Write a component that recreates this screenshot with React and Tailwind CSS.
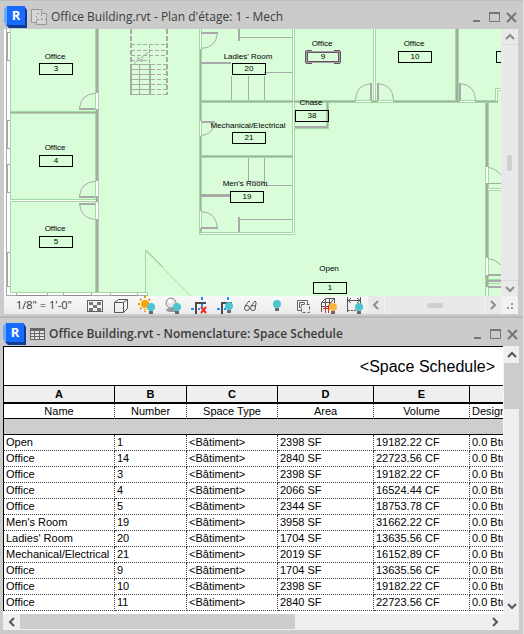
import React from 'react';

const columns = [
  { letter: 'A', name: 'Name' },
  { letter: 'B', name: 'Number' },
  { letter: 'C', name: 'Space Type' },
  { letter: 'D', name: 'Area' },
  { letter: 'E', name: 'Volume' },
];

const spaces = [
  ['Open', '1', '2398 SF', '19182.22 CF'],
  ['Office', '14', '2840 SF', '22723.56 CF'],
  ['Office', '3', '2398 SF', '19182.22 CF'],
  ['Office', '4', '2066 SF', '16524.44 CF'],
  ['Office', '5', '2344 SF', '18753.78 CF'],
  ["Men's Room", '19', '3958 SF', '31662.22 CF'],
  ["Ladies' Room", '20', '1704 SF', '13635.56 CF'],
  ['Mechanical/Electrical', '21', '2019 SF', '16152.89 CF'],
  ['Office', '9', '1704 SF', '13635.56 CF'],
  ['Office', '10', '2398 SF', '19182.22 CF'],
  ['Office', '11', '2840 SF', '22723.56 CF'],
];

// label, number, label centre, label baseline, tag left, tag top
const rooms = [
  ['Office', '3', 55, 59, 39, 63],
  ['Office', '4', 55, 150, 39, 155],
  ['Office', '5', 55, 231, 39, 236],
  ["Ladies' Room", '20', 248, 59, 232, 63],
  ['Mechanical/Electrical', '21', 248, 128, 232, 132],
  ["Men's Room", '19', 245, 186, 230, 191],
  ['Chase', '38', 311, 105, 295, 110],
  ['Office', '10', 414, 46, 398, 51],
  ['Open', '1', 329, 271, 313, 282],
];

const ChevronIcon = ({ d }) => (
  <svg width="10" height="10" viewBox="0 0 10 10" fill="none" stroke="currentColor" strokeWidth="2">
    <path d={d} />
  </svg>
);

const UP = 'M1 7 5 3 9 7';
const DOWN = 'M1 3 5 7 9 3';
const LEFT = 'M7 1 3 5 7 9';
const RIGHT = 'M3 1 7 5 3 9';

const RevitLogo = () => (
  <svg width="23" height="22" viewBox="0 0 23 22" className="shrink-0">
    <path d="M0 3 3 0V19L0 16Z" fill="#6ea8f7" />
    <path d="M3 19H21V1L23 4V22H5L1 18Z" fill="#0c3c94" />
    <rect x="3" y="0" width="18" height="19" fill="#186bff" />
    <text x="12" y="14" textAnchor="middle" fill="#fff" fontSize="13" fontWeight="700" fontFamily="'Open Sans', sans-serif">R</text>
  </svg>
);

const PlanIcon = () => (
  <svg width="16" height="16" viewBox="0 0 16 16" fill="none" stroke="#979797" className="shrink-0">
    <path d="M0.5 0.5H10.5V4.5H15.5V15.5H5.5V13.5H0.5Z" fill="#d6d6d6" />
    <path d="M5.5 13V5M6 4.5H10M10.5 5V10M6 10.5H15" strokeDasharray="2 2" />
  </svg>
);

const ScheduleIcon = () => (
  <svg width="15" height="12" viewBox="0 0 15 12" className="shrink-0">
    <rect width="15" height="12" fill="#666" />
    <g fill="#e2e2e2">
      {[3, 6, 9].map((y) => (
        <g key={y}>
          <rect x="1" y={y} width="3" height="2" />
          <rect x="5" y={y} width="4" height="2" />
          <rect x="10" y={y} width="4" height="2" />
        </g>
      ))}
    </g>
  </svg>
);

const WindowButtons = () => (
  <div className="flex items-center gap-0.5 -mr-0.5 text-[#767676]">
    <button type="button" aria-label="Minimize" className="w-4 h-4">
      <svg width="16" height="16" viewBox="0 0 16 16"><rect x="5" y="11" width="7" height="2" fill="currentColor" /></svg>
    </button>
    <button type="button" aria-label="Maximize" className="w-4 h-4">
      <svg width="16" height="16" viewBox="0 0 16 16" fill="none" stroke="currentColor">
        <path d="M3.5 3V12.5H13.5V3" />
        <path d="M3 4H14" strokeWidth="2" />
      </svg>
    </button>
    <button type="button" aria-label="Close" className="w-4 h-4">
      <svg width="16" height="16" viewBox="0 0 16 16" stroke="currentColor" strokeWidth="2"><path d="M3 4 12 13M12 4 3 13" /></svg>
    </button>
  </div>
);

const Lamp = ({ x = 17, y = 10, color = '#4bc4cf' }) => (
  <g>
    <rect x={x - 2} y={y + 4} width="4" height="3" fill="#6b6b6b" />
    <circle cx={x} cy={y} r="4" fill={color} />
  </g>
);

const CropLines = () => (
  <g fill="none">
    <path d="M10 18V7H20" stroke="#4c4c4c" strokeWidth="2" />
    <path d="M16 1V4M16 8V11M5 13H8M12 13H14" stroke="#1e8fff" strokeWidth="2" />
  </g>
);

const tools = [
  {
    label: 'Detail level',
    icon: (
      <g>
        <rect x="5.5" y="4.5" width="15" height="11" fill="#f3f3f3" stroke="#5f5f5f" />
        <path d="M7 6h4v3H7zM15 6h4v3h-4zM11 9h4v3h-4zM7 12h4v3H7zM15 12h4v3h-4z" fill="#777" />
      </g>
    ),
  },
  {
    label: 'Visual style',
    icon: <path d="M6.5 6.5H15.5V16.5H6.5ZM6.5 6.5 10.5 3.5H19.5L15.5 6.5M19.5 3.5V12.5L15.5 16.5" fill="none" stroke="#555" />,
  },
  {
    label: 'Sun path',
    icon: (
      <g>
        <path d="M11 0V16M4 8H18M6 3 16 13M16 3 6 13" stroke="#e8930c" strokeWidth="2" strokeDasharray="2 1" />
        <circle cx="11" cy="8" r="5" fill="#f3f3f3" />
        <circle cx="11" cy="8" r="4" fill="#f9a400" />
        <Lamp y={11} />
      </g>
    ),
  },
  {
    label: 'Shadows',
    icon: (
      <g>
        <ellipse cx="12" cy="14" rx="6" ry="2" fill="#9a9a9a" />
        <circle cx="11" cy="7" r="5" fill="#e6e6e6" stroke="#858585" />
        <circle cx="10" cy="5" r="2" fill="#fff" />
        <Lamp y={11} />
      </g>
    ),
  },
  {
    label: 'Crop view',
    icon: (
      <g>
        <CropLines />
        <path d="M15 11 20 17M20 11 15 17" stroke="#ef2b2b" strokeWidth="2" />
      </g>
    ),
  },
  { label: 'Show crop region', icon: (<g><CropLines /><Lamp /></g>) },
  {
    label: 'Temporary hide',
    icon: (
      <g fill="none" stroke="#555">
        <circle cx="9" cy="12" r="2.5" />
        <circle cx="15" cy="12" r="2.5" />
        <path d="M7 10 11 5 12 6M13 10 17 5 18 6V8L17 11" />
      </g>
    ),
  },
  { label: 'Reveal hidden elements', icon: <Lamp x={13} y={8} /> },
  {
    label: 'Temporary view properties',
    icon: (
      <g fill="none" stroke="#666">
        <path d="M11 14.5H7.5V4.5H17.5V8" />
        <path d="M11.5 11.5H9.5V6.5H14.5V8" />
        <path d="M11.5 8.5H19.5V16.5H11.5Z" strokeDasharray="3 2" />
      </g>
    ),
  },
  {
    label: 'Analytical model',
    icon: (
      <g fill="none">
        <path d="M5.5 16V6.5L9.5 2.5H18.5V7M5.5 6.5H15M9.5 3V13M13.5 3V10M5 10.5H13M18 2.5 15 6.5V9" stroke="#555" />
        <path d="M9.5 9V17M12.5 9V17M7 12.5H15" stroke="#d92c2c" />
        <Lamp y={11} color="#fbb53c" />
      </g>
    ),
  },
  {
    label: 'Reveal constraints',
    icon: (
      <g fill="none" stroke="#555">
        <path d="M5.5 1V16M18.5 1V8M6 4.5H18M9 2 6 4.5 9 7M15 2 18 4.5 15 7" />
        <path d="M6 14.5H14" strokeDasharray="2 1" />
        <g stroke="none"><Lamp y={11} /></g>
      </g>
    ),
  },
];

const FloorPlan = () => (
  <svg
    viewBox="4 29 498 267"
    preserveAspectRatio="xMinYMin slice"
    className="block w-full h-[267px]"
    fill="none"
    shapeRendering="crispEdges"
    role="img"
    aria-label="Mechanical floor plan"
  >
    <rect x="4" y="29" width="498" height="267" fill="#d9fdd9" />
    <path d="M4 29H10V292H147V296H4Z" fill="#fff" />

    {/* facade */}
    <g stroke="#a6a8a6">
      <path d="M6.5 29V296" />
      <path d="M10 32.5H7.5V60.5H10M10 120.5H7.5V148.5H10M10 164.5H7.5V192.5H10M10 252.5H7.5V286.5H10" />
      <path d="M6 295.5H147M16.5 293V296M47.5 293V296M63.5 293V296M91.5 293V296M110.5 293V296M137.5 293V296" />
    </g>
    <path d="M17 295.5H47M64 295.5H91M111 295.5H137" stroke="#8e8e8e" />

    {/* room outlines */}
    <g stroke="#a3d9a3">
      <path d="M10.5 29V292.5H147.5V296M98.5 29V292M95.5 29V292" />
      <path d="M10 111.5H96M10 113.5H96M10 199.5H97M10 201.5H97" />
      <path d="M199.5 29V234.5H294.5V29M201.5 29V232.5H292.5V29" />
      <path d="M201 100.5H292M201 102.5H292M201 155.5H292M201 157.5H292" />
      <path d="M295 100.5H496M295 102.5H498M373.5 29V101M375.5 29V101M458.5 29V101M455.5 29V101" />
      <path d="M328.5 102V128.5H295M326.5 102V125.5" />
      <path d="M495.5 101V88.5H502M497.5 101V90.5H502" />
      <path d="M485.5 103V296M488.5 103V296M488 188.5H502M488 190.5H502M488 279.5H502M488 283.5H502" />
      <path d="M145.5 250V293M145.5 250 191 296" />
    </g>

    {/* partitions */}
    <g stroke="#fff">
      <path d="M10 200.5H96M293.5 29V233.5H201M374.5 29V100M496.5 101V89.5H502M488 189.5H502M487.5 288V296" />
    </g>
    <g stroke="#a8aaa8">
      <path d="M97 29V93M97 109V181M97 196V202M97 219V292M457 29V101M487 103V167M487 183V258M487 275V287" strokeWidth="2" />
      <path d="M10 112.5H96M200.5 49V121M200.5 136V211M200.5 228V233M200 101.5H498M200 156.5H293M327.5 102V126M295 126.5H328M295 127.5H328" />
      <path d="M201 62.5H231M488 275H502M488 281H502M488 287H502M239 29V41M239 217V232" strokeWidth="2" />
      <path d="M201 195H231" strokeWidth="3" />
      <path d="M240 37.5H292M264 72.5H292M231.5 76V100M248.5 76V100M264.5 76V100" />
      <path d="M248.5 158V181.5H264.5V158M264.5 181V185.5H292M240 219.5H292M488 183.5H502" />
    </g>

    {/* doors */}
    <g fill="#fff">
      <path d="M96 93h2v16h-2zM96 181h2v15h-2zM96 203h2v16h-2zM200 33h1v16h-1zM200 121h1v15h-1zM200 211h1v17h-1z" />
      <path d="M356 101h15v1h-15zM378 101h15v1h-15zM460 101h15v1h-15zM486 167h2v16h-2zM486 258h2v17h-2z" />
    </g>
    <g stroke="#a8aaa8" strokeWidth="2">
      <path d="M79 109H95M79 197H95M79 204H95M201 33H218M201 122H215M201 228H218" />
      <path d="M371 83V100M378 83V100M460 83V100" />
    </g>
    <g stroke="#a8aaa8" shapeRendering="auto">
      <path d="M79.5 108Q81 94 95 93.5M79.5 196Q81 182 95 181.5M79.5 204Q81 218 95 219.5" />
      <path d="M217.5 33Q216 48 201 48.5M214.5 122Q213 135 201 135.5M217.5 228Q216 212 201 211.5" />
      <path d="M371 83.5Q356 85 355.5 100M378 83.5Q393 85 393.5 100M460 83.5Q475 85 475.5 100" />
      <path d="M488 167.5Q495 168 501 175M488 258.5Q495 259 501 265" />
    </g>

    {/* stairs */}
    <g stroke="#a8aaa8">
      <path d="M131 29V64M167 29V95" strokeWidth="2" strokeDasharray="5 2" />
      <path d="M131 64V95M150 64V95" strokeWidth="2" />
      <path d="M149.5 44V64" strokeDasharray="4 1" />
      <path d="M131 44.5H167M131 50.5H167M131 55.5H167M131 60.5H149M151 64.5H167M151 69.5H167M151 74.5H167M151 79.5H167M151 84.5H167M151 89.5H167M151 94.5H167" strokeDasharray="4 2" />
      <path d="M131 64.5H150M131 69.5H150M131 74.5H150M131 79.5H150M131 84.5H150M131 89.5H150M131 94.5H150M139.5 65V95" />
      <path d="M134 64 138 60V57L142 62V57L150 51" shapeRendering="auto" />
    </g>

    {/* room tags */}
    <g stroke="#000">
      {rooms.map(([, number, , , x, y]) => (
        <rect key={number} x={x + 0.5} y={y + 0.5} width="33" height="11" />
      ))}
      <path d="M502 51.5H496.5V62.5H502" />
    </g>
    <rect x="306.5" y="51.5" width="33" height="11" rx="1" stroke="#5e5660" strokeWidth="3" />
    <rect x="306.5" y="51.5" width="33" height="11" stroke="#a99fab" />
    <path d="M312 50.5H334M312 63.5H334" stroke="#d9fdd9" />
    <g fill="#000" fontSize="8" fontFamily="'Liberation Sans', Arial, sans-serif" textAnchor="middle">
      {rooms.map(([label, number, cx, cy, x, y]) => (
        <g key={number}>
          <text x={cx} y={cy}>{label}</text>
          <text x={x + 17} y={y + 8}>{number}</text>
        </g>
      ))}
      <text x="322" y="46">Office</text>
      <text x="323" y="59">9</text>
    </g>
  </svg>
);

const PlanWindow = () => (
  <section className="border-t border-[#bdbdbd] bg-[#cbcbcb] pl-1 pr-[5px] pb-0.5">
    <header className="flex items-center h-7 pt-1">
      <RevitLogo />
      <div className="flex flex-1 items-center gap-1 pl-1 min-w-0">
        <PlanIcon />
        <h1 className="font-['Open_Sans',sans-serif] text-[12px] text-[#3c3c3c] truncate">
          Office Building.rvt - Plan d'étage: 1 - Mech
        </h1>
      </div>
      <WindowButtons />
    </header>

    <div className="flex">
      <div className="flex-1 min-w-0">
        <FloorPlan />
      </div>
      <div className="flex flex-col w-[17px] bg-[#e9e9e9] text-[#8d8d8d]">
        <button type="button" aria-label="Scroll up" className="flex items-center justify-center h-4 border-b border-[#dcdcdc]">
          <ChevronIcon d={UP} />
        </button>
        <div className="flex flex-1 items-center justify-center">
          <div className="w-[5px] h-4 rounded-xs bg-[#cfcfcf]" />
        </div>
        <button type="button" aria-label="Scroll down" className="flex items-center justify-center h-4 border-t border-[#dcdcdc]">
          <ChevronIcon d={DOWN} />
        </button>
      </div>
    </div>

    <footer className="flex h-[18px] bg-linear-to-b from-[#f9f9f9] to-[#ebebeb] text-[#8d8d8d]">
      <button type="button" className="w-[78px] pr-1 pl-3 text-left font-['Open_Sans',sans-serif] text-[11px] leading-[18px] text-[#333] whitespace-nowrap">
        1/8" = 1'-0"
      </button>
      {tools.map((tool) => (
        <button key={tool.label} type="button" aria-label={tool.label} className="w-[26px] h-[18px]">
          <svg width="26" height="18" viewBox="0 0 26 18">{tool.icon}</svg>
        </button>
      ))}
      <div className="flex flex-1 bg-[#e9e9e9]">
        <button type="button" aria-label="Scroll left" className="flex items-center justify-center w-4">
          <ChevronIcon d={LEFT} />
        </button>
        <div className="flex flex-1 items-center justify-center border-x border-[#f4f4f4]">
          <div className="w-4 h-[5px] rounded-xs bg-[#cfcfcf]" />
        </div>
        <button type="button" aria-label="Scroll right" className="flex items-center justify-center w-4">
          <ChevronIcon d={RIGHT} />
        </button>
      </div>
      <svg width="17" height="18" viewBox="0 0 17 18" fill="#999" className="shrink-0 bg-[#f1f1f1]">
        <path d="M10 7h2v2h-2zM6 11h2v2H6zM10 11h2v2h-2z" />
      </svg>
    </footer>
  </section>
);

const ScheduleTable = () => (
  <table className="w-full table-fixed border-separate border-spacing-0 bg-white border-l border-black font-['Liberation_Sans',Arial,sans-serif] text-[11px] leading-[15px] text-black">
    <colgroup>
      <col className="w-[111px]" />
      <col className="w-[72px]" />
      <col className="w-[91px]" />
      <col className="w-[96px]" />
      <col className="w-[96px]" />
      <col />
    </colgroup>
    <thead>
      <tr>
        <th colSpan="6" className="h-10 pr-2 border-y border-black text-right text-[16px] font-normal">
          &lt;Space Schedule&gt;
        </th>
      </tr>
      <tr className="bg-[#efefef]">
        {columns.map((col) => (
          <th key={col.letter} className="h-[18px] p-0 border-r border-b-2 border-black font-bold">{col.letter}</th>
        ))}
        <th className="p-0 border-b-2 border-black" />
      </tr>
      <tr className="leading-[14px]">
        {columns.map((col) => (
          <th key={col.letter} className="p-0 border-r border-r-[#444] border-dotted border-b border-b-black [border-bottom-style:solid] font-normal">
            {col.name}
          </th>
        ))}
        <th className="p-0 pl-0.5 border-b border-black font-normal text-left whitespace-nowrap overflow-hidden">Design</th>
      </tr>
    </thead>
    <tbody>
      <tr>
        <td colSpan="6" className="h-4 p-0 border-b border-black bg-[#cecece]" />
      </tr>
      {spaces.map(([name, number, area, volume]) => (
        <tr key={number}>
          {[name, number, '<Bâtiment>', area, volume].map((value, i) => (
            <td key={i} className="p-0 pl-0.5 border-r border-b border-dotted border-[#444] whitespace-nowrap">{value}</td>
          ))}
          <td className="p-0 pl-0.5 border-b border-dotted border-[#444] whitespace-nowrap overflow-hidden">0.0 Btu</td>
        </tr>
      ))}
    </tbody>
  </table>
);

const ScheduleWindow = () => (
  <section className="border-t-2 border-[#b8b8b8] bg-[#cbcbcb] pl-[3px] pr-1 pb-1">
    <header className="flex items-center h-7 pt-1">
      <RevitLogo />
      <div className="flex flex-1 items-center gap-1 pl-1 min-w-0">
        <ScheduleIcon />
        <h2 className="font-['Open_Sans',sans-serif] text-[12px] font-semibold text-[#3c3c3c] truncate">
          Office Building.rvt - Nomenclature: Space Schedule
        </h2>
      </div>
      <WindowButtons />
    </header>

    <div className="flex bg-[#efefef] text-[#555]">
      <div className="flex-1 min-w-0 pb-[3px] bg-white overflow-hidden">
        <ScheduleTable />
      </div>
      <div className="flex flex-col w-4 border-l border-[#f7f7f7]">
        <button type="button" aria-label="Scroll up" className="flex items-center justify-center h-[17px]">
          <ChevronIcon d={UP} />
        </button>
        <div className="flex-1">
          <div className="h-[46px] bg-[#cdcdcd]" />
        </div>
        <button type="button" aria-label="Scroll down" className="flex items-center justify-center h-[17px]">
          <ChevronIcon d={DOWN} />
        </button>
      </div>
    </div>

    <div className="flex h-4 bg-[#efefef] text-[#555]">
      <button type="button" aria-label="Scroll left" className="flex items-center justify-center w-[17px]">
        <ChevronIcon d={LEFT} />
      </button>
      <div className="flex-1">
        <div className="w-[59%] h-[15px] bg-[#cdcdcd]" />
      </div>
      <button type="button" aria-label="Scroll right" className="flex items-center justify-center w-[17px]">
        <ChevronIcon d={RIGHT} />
      </button>
      <div className="w-4" />
    </div>
  </section>
);

export default function App() {
  return (
    <main className="bg-[#cbcbcb] border-r border-[#e4e4e4]">
      <PlanWindow />
      <ScheduleWindow />
    </main>
  );
}
